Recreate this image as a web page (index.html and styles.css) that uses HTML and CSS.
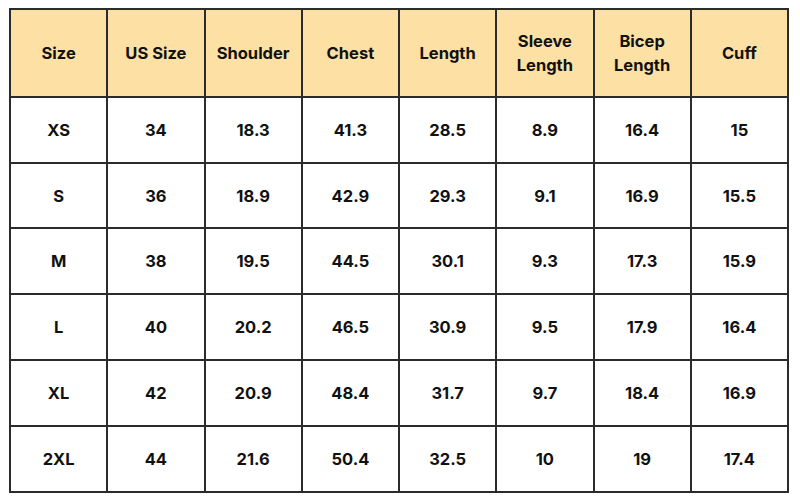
FILE: index.html
```html
<!DOCTYPE html>
<html>
<head>
<meta charset="utf-8">
<link rel="stylesheet" href="styles.css">
</head>
<body>
<table class="size-chart">
  <thead>
    <tr>
      <th>Size</th><th>US Size</th><th>Shoulder</th><th>Chest</th><th>Length</th><th>Sleeve<br>Length</th><th>Bicep<br>Length</th><th>Cuff</th>
    </tr>
  </thead>
  <tbody>
    <tr><td>XS</td><td>34</td><td>18.3</td><td>41.3</td><td>28.5</td><td>8.9</td><td>16.4</td><td>15</td></tr>
    <tr><td>S</td><td>36</td><td>18.9</td><td>42.9</td><td>29.3</td><td>9.1</td><td>16.9</td><td>15.5</td></tr>
    <tr><td>M</td><td>38</td><td>19.5</td><td>44.5</td><td>30.1</td><td>9.3</td><td>17.3</td><td>15.9</td></tr>
    <tr><td>L</td><td>40</td><td>20.2</td><td>46.5</td><td>30.9</td><td>9.5</td><td>17.9</td><td>16.4</td></tr>
    <tr><td>XL</td><td>42</td><td>20.9</td><td>48.4</td><td>31.7</td><td>9.7</td><td>18.4</td><td>16.9</td></tr>
    <tr><td>2XL</td><td>44</td><td>21.6</td><td>50.4</td><td>32.5</td><td>10</td><td>19</td><td>17.4</td></tr>
  </tbody>
</table>
</body>
</html>
```
FILE: styles.css
```css
html, body {
  margin: 0;
  background: #ffffff;
}
body {
  padding: 8px 0 0 9px;
  font-family: "Inter", "Open Sans", sans-serif;
  color: #111111;
}
.size-chart {
  border-collapse: collapse;
  table-layout: fixed;
  width: 780px;
}
.size-chart th,
.size-chart td {
  border: 2px solid #2b2b2b;
  text-align: center;
  vertical-align: middle;
  font-weight: 700;
  font-size: 16.5px;
  padding: 0;
}
.size-chart th {
  background: #fde0a4;
  height: 85.7px;
  line-height: 24px;
}
.size-chart td {
  height: 63.9px;
}
```
